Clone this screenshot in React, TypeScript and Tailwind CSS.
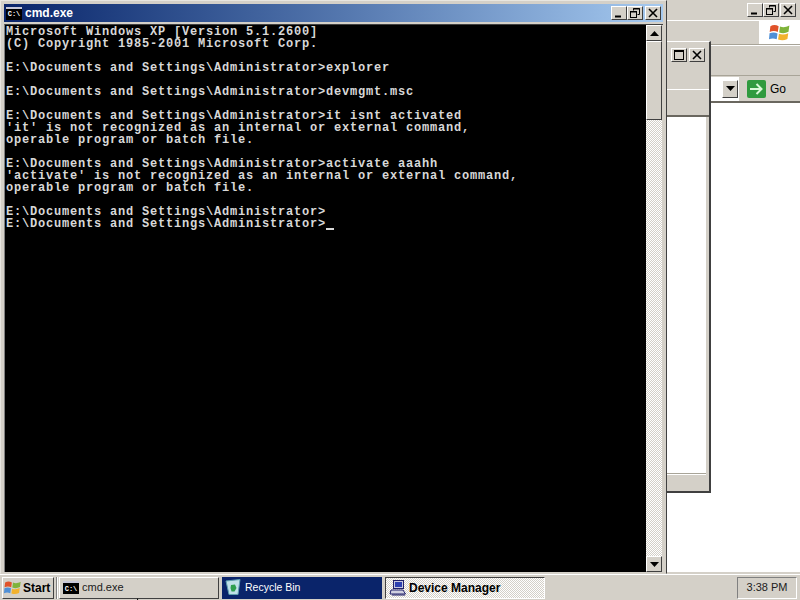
import React from "react";

const raised = "border border-t-white border-l-white border-r-[#404040] border-b-[#404040] bg-[#d4d0c8]";

function Min() {
  return (
    <svg width="14" height="12" viewBox="0 0 14 12"><rect x="3" y="8.5" width="6" height="2" fill="#000" /></svg>
  );
}
function Restore() {
  return (
    <svg width="14" height="12" viewBox="0 0 14 12" fill="none" stroke="#000">
      <path d="M5.5 3.5V1.5H11.5V7.5H9.5" />
      <path d="M5 2H12" />
      <rect x="2.5" y="4.5" width="6" height="6" />
      <path d="M2 5H9" />
    </svg>
  );
}
function Close() {
  return (
    <svg width="14" height="12" viewBox="0 0 14 12" stroke="#000" strokeWidth="1.6">
      <path d="M3 2L11 10M11 2L3 10" />
    </svg>
  );
}
function Max() {
  return (
    <svg width="14" height="12" viewBox="0 0 14 12" fill="none" stroke="#000">
      <rect x="2.5" y="1.5" width="9" height="9" />
      <path d="M2 2.5H12" />
    </svg>
  );
}
function Btn({ children, className = "" }: { children: React.ReactNode; className?: string }) {
  return <div className={`w-[16px] h-[14px] flex items-center justify-center ${raised} ${className}`}>{children}</div>;
}
function Arrow({ up }: { up?: boolean }) {
  return (
    <svg width="9" height="5" viewBox="0 0 9 5"><path d={up ? "M4.5 0L9 5H0Z" : "M0 0H9L4.5 5Z"} fill="#000" /></svg>
  );
}
function CmdIcon({ w = 16, h = 13 }: { w?: number; h?: number }) {
  return (
    <div className="bg-black border-t-2 border-t-[#c8c8d8] flex items-center justify-center shrink-0 text-white font-bold font-['Liberation_Mono',monospace] text-[7px] leading-[8px]" style={{ width: w, height: h }}>
      C:\
    </div>
  );
}
function Flag({ size = 16 }: { size?: number }) {
  return (
    <svg width={size} height={size} viewBox="0 0 16 16">
      <path d="M1 3C3 2 5 2 7 3L6.4 7.3C4.5 6.4 2.5 6.4 0.5 7.3Z" fill="#e0522a" />
      <path d="M8 3.2C10 4 12 4 14.8 2.5L14.2 7.1C12 8.3 9.6 8.4 7.4 7.6Z" fill="#7fb33a" />
      <path d="M0.4 8.2C2.4 7.4 4.3 7.4 6.2 8.3L5.6 12.6C3.8 11.7 1.8 11.7 0 12.6Z" fill="#4f8fd6" />
      <path d="M7.2 8.6C9.4 9.4 11.6 9.3 14 8.1L13.4 12.4C11 13.6 8.8 13.6 6.6 12.8Z" fill="#f2b22e" />
    </svg>
  );
}
function RecycleIcon() {
  return (
    <svg width="17" height="17" viewBox="0 0 17 17">
      <path d="M1 2L15 0.5L13 15.5H4Z" fill="#bfe0e8" stroke="#5f9fae" />
      <path d="M6 6L10 5.5L11.5 9L9.5 12.5H6.5L5.5 9Z" fill="#2e9e4e" />
    </svg>
  );
}
function ComputerIcon() {
  return (
    <svg width="18" height="18" viewBox="0 0 18 18">
      <rect x="4.5" y="1.5" width="10" height="8" fill="#c8c8e0" stroke="#20206a" />
      <rect x="6" y="3" width="7" height="5" fill="#2c3fb0" />
      <path d="M2 11H14L16.5 15H1Z" fill="#d0d0e0" stroke="#20206a" />
      <path d="M3 16H16" stroke="#20206a" />
    </svg>
  );
}

const lines = [
  "Microsoft Windows XP [Version 5.1.2600]",
  "(C) Copyright 1985-2001 Microsoft Corp.",
  "",
  "E:\\Documents and Settings\\Administrator>explorer",
  "",
  "E:\\Documents and Settings\\Administrator>devmgmt.msc",
  "",
  "E:\\Documents and Settings\\Administrator>it isnt activated",
  "'it' is not recognized as an internal or external command,",
  "operable program or batch file.",
  "",
  "E:\\Documents and Settings\\Administrator>activate aaahh",
  "'activate' is not recognized as an internal or external command,",
  "operable program or batch file.",
  "",
  "E:\\Documents and Settings\\Administrator>",
];

export default function App() {
  return (
    <div className="w-[800px] h-[600px] overflow-hidden flex flex-col bg-[#d4d0c8] font-['Liberation_Sans',sans-serif] text-[12px] text-black">
      <div className="relative flex-1 bg-[#d4d0c8]">
        {/* Explorer window behind */}
        <div className="absolute left-[667px] top-0 w-[133px] h-[574px] flex flex-col bg-white">
          <div className="h-[20px] flex justify-end items-center pr-[4px] bg-[#d4d0c8]">
            <Btn><Min /></Btn>
            <Btn className="mr-[1px]"><Restore /></Btn>
            <Btn><Close /></Btn>
          </div>
          <div className="h-[25px] flex justify-end border-t border-t-white border-b border-b-[#a8a498] bg-[#d4d0c8]">
            <div className="w-[41px] bg-white flex items-center justify-center">
              <Flag size={22} />
            </div>
          </div>
          <div className="h-[31px] bg-[#d4d0c8] border-t border-t-white border-b border-b-[#a8a498]" />
          <div className="h-[25px] bg-[#d4d0c8] flex items-center">
            <div className="flex-1 h-[24px] bg-white flex items-center justify-end pr-[1px] mr-[8px]">
              <div className={`w-[16px] h-[18px] flex items-center justify-center ${raised}`}><Arrow /></div>
            </div>
            <div className="w-[19px] h-[18px] bg-[#2f9a3f] rounded-[2px] flex items-center justify-center">
              <svg width="13" height="12" viewBox="0 0 13 12" fill="none" stroke="#d8f8d8" strokeWidth="2"><path d="M0 6H11M6.5 1L11.5 6L6.5 11" /></svg>
            </div>
            <span className="ml-[4px] w-[30px] text-[12px]">Go</span>
          </div>
          <div className="h-[2px] bg-[#6a675f]" />
          <div className="flex-1 bg-white border-b-2 border-b-[#d4d0c8]" />
        </div>

        {/* Middle window */}
        <div className="absolute left-[600px] top-[41px] w-[111px] h-[452px] flex flex-col bg-[#d4d0c8] border-r-2 border-r-[#404040] border-b-2 border-b-[#404040] border-t border-t-white">
          <div className="h-[24px] flex justify-end items-center gap-[2px] pr-[4px] pt-[2px]">
            <Btn><Max /></Btn>
            <Btn><Close /></Btn>
          </div>
          <div className="h-[24px] border-b border-b-white" />
          <div className="h-[27px] border-b-2 border-b-[#6a675f]" />
          <div className="flex-1 bg-white mr-[3px]" />
          <div className="h-[3px] bg-white mr-[3px] border-b border-b-[#a8a498]" />
          <div className="h-[17px] mr-[3px] border-t border-t-white" />
        </div>

        {/* cmd window */}
        <div className="absolute left-0 top-0 w-[667px] h-[574px] bg-[#d4d0c8] border border-t-[#e8e6e0] border-r-[#404040] border-l-[#e8e6e0] border-b-[#d4d0c8] pt-[3px] pb-[1px] pl-[3px] pr-[3px] flex flex-col">
          <div className="h-[18px] bg-gradient-to-r from-[#0a246a] to-[#a6caf0] flex items-center pl-[2px] pr-[2px] gap-[3px] shrink-0">
            <CmdIcon />
            <span className="flex-1 text-white font-bold text-[12px]">cmd.exe</span>
            <div className="flex">
              <Btn><Min /></Btn>
              <Btn className="mr-[2px]"><Restore /></Btn>
              <Btn><Close /></Btn>
            </div>
          </div>
          <div className="flex flex-1 mt-[2px] min-h-0 border-t border-t-[#404040] border-l border-l-[#808080]">
            <div className="flex-1 bg-black pl-[1px] pt-[1px] text-[#d8d8d8] font-['Liberation_Mono',monospace] font-bold text-[12px] tracking-[0.8px] leading-[12px] whitespace-pre">
              {lines.map((l, i) => (
                <div key={i} className="h-[12px]">{l}</div>
              ))}
              <div className="h-[12px] relative">
                {"E:\\Documents and Settings\\Administrator>"}
                <span className="absolute left-[320px] top-[10px] w-[8px] h-[2px] bg-[#d8d8d8]" />
              </div>
            </div>
            <div className="w-[16px] mr-[1px] flex flex-col bg-[repeating-conic-gradient(#ffffff_0%_25%,#d4d0c8_0%_50%)] bg-[length:2px_2px]">
              <div className={`h-[16px] flex items-center justify-center ${raised}`}><Arrow up /></div>
              <div className={`h-[79px] ${raised}`} />
              <div className="flex-1" />
              <div className={`h-[16px] flex items-center justify-center ${raised}`}><Arrow /></div>
            </div>
          </div>
        </div>
      </div>

      {/* Taskbar */}
      <div className="relative h-[26px] shrink-0 bg-[#d4d0c8] border-t border-t-white flex items-center pl-[2px] pr-[3px] text-[11px]">
        <div className={`w-[52px] h-[22px] flex items-center pl-[1px] gap-[1px] ${raised}`}>
          <Flag size={18} />
          <span className="font-bold text-[12px]">Start</span>
        </div>
        <div className="w-[2px] h-[22px] ml-[2px] border-l border-l-[#808080] border-r border-r-white" />
        <div className={`w-[160px] h-[22px] ml-[1px] flex items-center pl-[3px] gap-[3px] ${raised}`}>
          <CmdIcon />
          <span className="text-[#202020]">cmd.exe</span>
        </div>
        <div className="w-[160px] h-[22px] ml-[3px] flex items-center pl-[3px] gap-[3px] bg-[#0a246a] text-white">
          <RecycleIcon />
          <span className="text-[10.5px]">Recycle Bin</span>
        </div>
        <div className="w-[160px] h-[22px] ml-[3px] flex items-center pl-[3px] gap-[2px] border border-t-[#404040] border-l-[#404040] border-r-white border-b-white bg-[repeating-conic-gradient(#ffffff_0%_25%,#d4d0c8_0%_50%)] bg-[length:2px_2px]">
          <ComputerIcon />
          <span className="font-bold text-[12px]">Device Manager</span>
        </div>
        <div className="flex-1" />
        <div className="w-[60px] h-[22px] border border-t-[#808080] border-l-[#808080] border-r-white border-b-white flex items-center justify-center text-[#202020]">
          3:38 PM
        </div>
        {/* mouse pointer tip */}
        <svg className="absolute left-[136px] top-[23px]" width="4" height="3" viewBox="0 0 4 3"><path d="M1 0L1 3L3 3Z" fill="#000" /></svg>
      </div>
    </div>
  );
}
